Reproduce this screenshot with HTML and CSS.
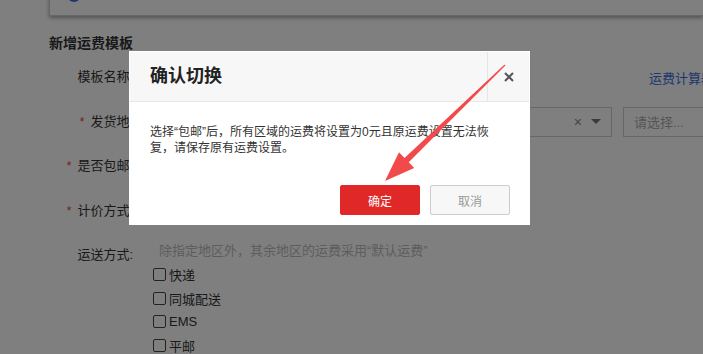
FILE: index.html
```html
<!DOCTYPE html>
<html lang="zh-CN">
<head>
<meta charset="utf-8">
<title>新增运费模板</title>
<link rel="stylesheet" href="styles.css">
</head>
<body>
<div class="page">
  <div class="notice"><span class="notice-icon"></span></div>
  <h2 class="page-title">新增运费模板</h2>
  <div class="form">
    <div class="row">
      <label class="label">模板名称:</label>
      <div class="input name-input"></div>
      <a class="link">运费计算器</a>
    </div>
    <div class="row">
      <label class="label"><span class="req">*</span>发货地:</label>
      <div class="select wide"><span class="clear">×</span><span class="caret"></span></div>
      <div class="select narrow"><span class="placeholder">请选择...</span></div>
    </div>
    <div class="row">
      <label class="label"><span class="req">*</span>是否包邮:</label>
    </div>
    <div class="row">
      <label class="label"><span class="req">*</span>计价方式:</label>
    </div>
    <div class="row row-top">
      <label class="label label-ship">运送方式:</label>
      <div class="ship">
        <p class="hint">除指定地区外，其余地区的运费采用“默认运费”</p>
        <label class="check"><span class="box"></span>快递</label>
        <label class="check"><span class="box"></span>同城配送</label>
        <label class="check"><span class="box"></span>EMS</label>
        <label class="check"><span class="box"></span>平邮</label>
      </div>
    </div>
  </div>
</div>

<div class="mask"></div>

<div class="dialog">
  <div class="dialog-head">
    <div class="dialog-title">确认切换</div>
    <div class="dialog-close">
      <svg width="10" height="10" viewBox="0 0 10 10"><path d="M1 1 L9 9 M9 1 L1 9" stroke="#555" stroke-width="2" fill="none"/></svg>
    </div>
  </div>
  <div class="dialog-body">选择“包邮”后，所有区域的运费将设置为0元且原运费设置无法恢复，请保存原有运费设置。</div>
  <div class="dialog-foot">
    <button class="btn btn-primary">确定</button>
    <button class="btn btn-default">取消</button>
  </div>
</div>

<svg class="arrow" width="703" height="354" viewBox="0 0 703 354">
  <polygon points="504.6,64.6 505.4,65.4 408.7,162.3 414.2,168 385,181 399,152.2 404.5,157.9" fill="#f24a4a"/>
</svg>
</body>
</html>
```

FILE: styles.css
```css
html, body {
  margin: 0;
  padding: 0;
}
body {
  width: 703px;
  height: 354px;
  overflow: hidden;
  background: #fff;
  font-family: "Liberation Sans", "Noto Sans CJK SC", sans-serif;
  color: #333;
  position: relative;
}
.page {
  padding-left: 49px;
}
.notice {
  height: 30px;
  margin-top: -16px;
  border: 1px solid #ccc;
  border-right: 0;
  background: #fff;
  box-shadow: 0 2px 4px rgba(0, 0, 0, 0.35);
  position: relative;
}
.notice-icon {
  position: absolute;
  left: 17px;
  top: 3px;
  width: 14px;
  height: 14px;
  border-radius: 50%;
  background: #3a6fdc;
}
.page-title {
  margin: 17px 0 0;
  font-size: 14px;
  line-height: 20px;
  font-weight: bold;
  color: #333;
}
.form {
  margin-top: 9px;
  display: flex;
  flex-direction: column;
  gap: 14.5px;
}
.row {
  display: flex;
  align-items: center;
  height: 30px;
}
.row-top {
  align-items: flex-start;
  height: auto;
}
.label {
  width: 84px;
  flex: none;
  text-align: right;
  font-size: 13px;
  line-height: 22px;
  color: #333;
  margin-right: 20px;
}
.label-ship {
  padding-top: 4px;
}
.req {
  color: #e4393c;
  margin-right: 6px;
  font-size: 12px;
}
.input {
  height: 30px;
  box-sizing: border-box;
  border: 1px solid #ccc;
  flex: none;
}
.name-input {
  width: 350px;
}
.link {
  margin-left: 146px;
  font-size: 13px;
  color: #3a6fdc;
  white-space: nowrap;
  flex: none;
}
.select {
  height: 30px;
  box-sizing: border-box;
  border: 1px solid #ccc;
  display: flex;
  align-items: center;
  flex: none;
}
.wide {
  width: 459px;
  justify-content: flex-end;
  padding-right: 10px;
}
.narrow {
  width: 140px;
  margin-left: 11px;
  padding-left: 10px;
}
.clear {
  font-size: 14px;
  color: #888;
  margin-right: 9px;
}
.caret {
  width: 0;
  height: 0;
  border-left: 5px solid transparent;
  border-right: 5px solid transparent;
  border-top: 5px solid #777;
}
.placeholder {
  font-size: 13px;
  color: #aaa;
}
.ship {
  display: flex;
  flex-direction: column;
}
.hint {
  margin: 0 0 1px;
  padding-left: 6px;
  font-size: 13px;
  line-height: 22px;
  color: #bbb;
}
.check {
  display: flex;
  align-items: center;
  height: 23.6px;
  font-size: 13px;
  color: #333;
}
.box {
  width: 13px;
  height: 13px;
  box-sizing: border-box;
  border: 1px solid #444;
  border-radius: 2px;
  margin-right: 3px;
}
.mask {
  position: absolute;
  inset: 0;
  background: rgba(0, 0, 0, 0.5);
}
.dialog {
  position: absolute;
  left: 129px;
  top: 51px;
  width: 401px;
  height: 174px;
  box-sizing: border-box;
  border: 1px solid #fff;
  background: #fff;
  display: flex;
  flex-direction: column;
}
.dialog-head {
  display: flex;
  height: 49px;
  flex: none;
  background: #f7f7f7;
  border-bottom: 1px solid #e8e8e8;
}
.dialog-title {
  flex: 1;
  padding-left: 20px;
  font-size: 18px;
  font-weight: bold;
  line-height: 49px;
  color: #222;
}
.dialog-close {
  width: 41px;
  border-left: 1px solid #e6e6e6;
  display: flex;
  align-items: center;
  justify-content: center;
}
.dialog-body {
  padding: 22px 34px 0 20px;
  font-size: 12px;
  line-height: 16px;
  color: #333;
}
.dialog-foot {
  margin-top: auto;
  display: flex;
  justify-content: flex-end;
  gap: 10px;
  padding: 0 19px 9px 0;
}
.btn {
  width: 80px;
  height: 30px;
  box-sizing: border-box;
  border-radius: 2px;
  font-family: inherit;
  font-size: 12px;
  padding: 0;
  cursor: pointer;
}
.btn-primary {
  background: #e02828;
  border: 1px solid #e02828;
  color: #fff;
}
.btn-default {
  background: #f7f7f7;
  border: 1px solid #ccc;
  color: #999;
}
.arrow {
  position: absolute;
  left: 0;
  top: 0;
  pointer-events: none;
}
```
